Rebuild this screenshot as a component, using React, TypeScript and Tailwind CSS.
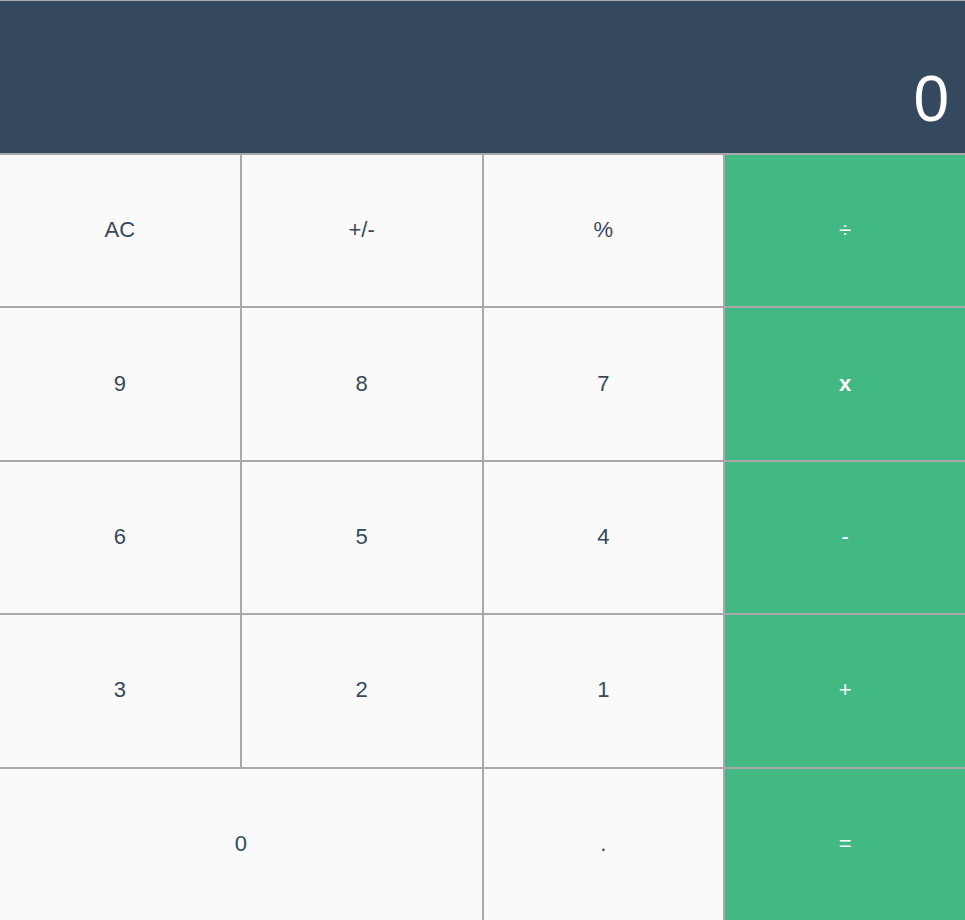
const keys: { label: string; op?: boolean; wide?: boolean }[] = [
  { label: "AC" },
  { label: "+/-" },
  { label: "%" },
  { label: "÷", op: true },
  { label: "9" },
  { label: "8" },
  { label: "7" },
  { label: "x", op: true },
  { label: "6" },
  { label: "5" },
  { label: "4" },
  { label: "-", op: true },
  { label: "3" },
  { label: "2" },
  { label: "1" },
  { label: "+", op: true },
  { label: "0", wide: true },
  { label: "." },
  { label: "=", op: true },
];

export default function App() {
  return (
    <div
      className="flex h-[920px] w-full flex-col overflow-hidden border-t border-[#a9a9a9] bg-[#a9a9a9]"
      style={{ fontFamily: '"Liberation Sans", Arial, sans-serif' }}
    >
      <div className="flex h-[152px] shrink-0 items-end justify-end bg-[#34495e] pb-[22px] pr-4 text-[64px] leading-none text-white">
        0
      </div>
      <div className="mt-[2px] grid flex-1 grid-cols-4 grid-rows-5 gap-[2px]">
        {keys.map((k) => (
          <button
            key={k.label}
            type="button"
            className={
              (k.wide ? "col-span-2 " : "") +
              (k.op
                ? "bg-[#42b883] text-white "
                : "bg-[#fafafa] text-[#34495e] ") +
              (k.label === "x" ? "font-bold " : "") +
              "flex items-center justify-center pb-[1px] text-[22px] leading-none"
            }
          >
            {k.label}
          </button>
        ))}
      </div>
    </div>
  );
}
